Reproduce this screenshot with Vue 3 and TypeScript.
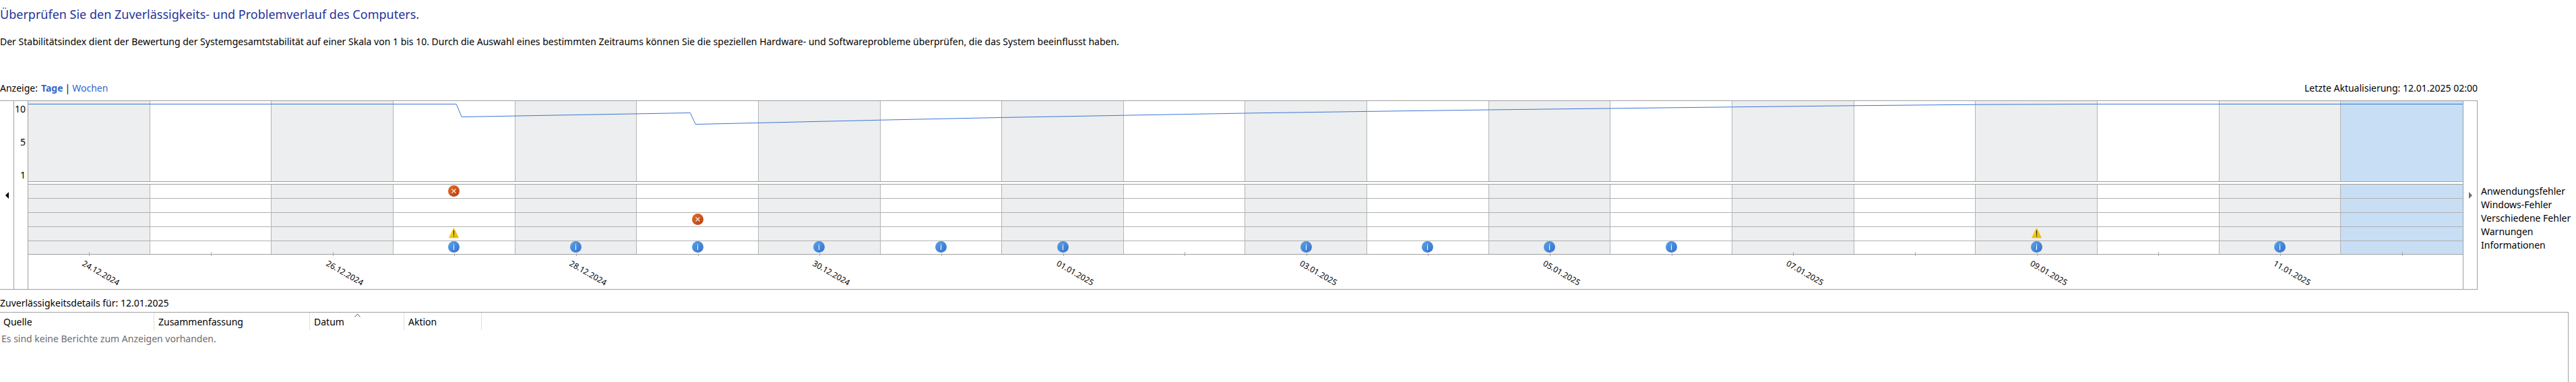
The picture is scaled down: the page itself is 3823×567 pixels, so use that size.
<script setup lang="ts">
type Kind = 'error' | 'warning' | 'info'
interface Day { date: string; events: (Kind | null)[]; selected: boolean }

const rowNames = ['Anwendungsfehler', 'Windows-Fehler', 'Verschiedene Fehler', 'Warnungen', 'Informationen']
const dates = [
  '24.12.2024', '25.12.2024', '26.12.2024', '27.12.2024', '28.12.2024', '29.12.2024', '30.12.2024', '31.12.2024',
  '01.01.2025', '02.01.2025', '03.01.2025', '04.01.2025', '05.01.2025', '06.01.2025', '07.01.2025', '08.01.2025',
  '09.01.2025', '10.01.2025', '11.01.2025', '12.01.2025',
]
const infoDays = [3, 4, 5, 6, 7, 8, 10, 11, 12, 13, 16, 18]
const days: Day[] = dates.map((date, i) => ({
  date,
  selected: i === dates.length - 1,
  events: [
    i === 3 ? 'error' : null,
    null,
    i === 5 ? 'error' : null,
    i === 3 || i === 16 ? 'warning' : null,
    infoDays.includes(i) ? 'info' : null,
  ],
}))

const columns = ['Quelle', 'Zusammenfassung', 'Datum', 'Aktion']
const stability = '0,4.5 635,4.5 643,23.5 982,17.5 990,34.5 1265,28.2 1446,24.4 1626,21.2 1806,18 1987,15.4 2168,13 2349,10.9 2529,8.8 2709,6.8 2890,5.2 3071,4.5 3612,4.5'
</script>

<template>
  <main class="page">
    <h1>Überprüfen Sie den Zuverlässigkeits- und Problemverlauf des Computers.</h1>
    <p class="intro">Der Stabilitätsindex dient der Bewertung der Systemgesamtstabilität auf einer Skala von 1 bis 10. Durch die Auswahl eines bestimmten Zeitraums können Sie die speziellen Hardware- und Softwareprobleme überprüfen, die das System beeinflusst haben.</p>

    <div class="toolbar">
      <nav class="view">
        <span class="caption">Anzeige:</span>
        <a href="#tage" class="current">Tage</a>
        <span>|</span>
        <a href="#wochen">Wochen</a>
      </nav>
      <span>Letzte Aktualisierung: 12.01.2025 02:00</span>
    </div>

    <div class="chart-area">
      <section class="chart">
        <button class="scroll" type="button" aria-label="Zurück">
          <svg width="5" height="10" viewBox="0 0 5 10"><path d="M5 0v10L0 5z" fill="#000" /></svg>
        </button>
        <div class="scale"><span>10</span><span>5</span><span>1</span></div>
        <div class="plot">
          <div class="graph">
            <div v-for="d in days" :key="d.date" class="day" :class="{ selected: d.selected }"></div>
            <svg class="curve" viewBox="0 0 3612 119" preserveAspectRatio="none">
              <polyline :points="stability" fill="none" stroke="#3a76d6" stroke-width="1" vector-effect="non-scaling-stroke" />
            </svg>
          </div>
          <div class="events">
            <div v-for="d in days" :key="d.date" class="day" :class="{ selected: d.selected }">
              <div v-for="(e, r) in d.events" :key="r" class="cell">
                <svg v-if="e === 'error'" width="17" height="17" viewBox="0 0 17 17">
                  <defs><linearGradient id="err" x1="0" y1="0" x2="1" y2="1"><stop offset="0" stop-color="#e0702c" /><stop offset="1" stop-color="#b83c0c" /></linearGradient></defs>
                  <circle cx="8.5" cy="8.5" r="8.5" fill="url(#err)" />
                  <path d="M5.5 5.5l6 6M11.5 5.5l-6 6" stroke="#fbe9e0" stroke-width="1.2" />
                </svg>
                <svg v-else-if="e === 'warning'" width="17" height="17" viewBox="0 0 17 17">
                  <defs><linearGradient id="warn" x1="0" y1="0" x2="1" y2="1"><stop offset="0" stop-color="#ffe81a" /><stop offset="1" stop-color="#eeb000" /></linearGradient></defs>
                  <path d="M8.5 0.8L15.3 14.8H1.7z" fill="url(#warn)" stroke="#eabc00" stroke-width="1" stroke-linejoin="round" />
                  <path d="M8.5 4v6.5M8.5 11.6v1.6" stroke="#222" stroke-width="1.2" />
                </svg>
                <svg v-else-if="e === 'info'" width="17" height="17" viewBox="0 0 17 17">
                  <defs><linearGradient id="inf" x1="0" y1="0" x2="1" y2="1"><stop offset="0" stop-color="#56a6e8" /><stop offset="1" stop-color="#386ccc" /></linearGradient></defs>
                  <circle cx="8.5" cy="8.5" r="8.5" fill="url(#inf)" />
                  <path d="M8.5 6.2v6.8M8.5 4v1.2" stroke="#fff" stroke-width="1.1" />
                </svg>
              </div>
            </div>
          </div>
          <div class="axis">
            <div v-for="(d, i) in days" :key="d.date" class="tick" :class="{ below: d.events[4] }">
              <span v-if="i % 2 === 0" class="date">{{ d.date }}</span>
            </div>
          </div>
        </div>
        <button class="scroll next" type="button" aria-label="Weiter" disabled>
          <svg width="5" height="10" viewBox="0 0 5 10"><path d="M0 0v10L5 5z" fill="#6d6d6d" /></svg>
        </button>
      </section>
      <ul class="rows"><li v-for="name in rowNames" :key="name">{{ name }}</li></ul>
    </div>

    <h2>Zuverlässigkeitsdetails für: 12.01.2025</h2>
    <section class="details">
      <table>
        <thead>
          <tr>
            <th v-for="c in columns" :key="c" scope="col" :class="c.toLowerCase()">
              {{ c }}
              <svg v-if="c === 'Datum'" class="sort" width="9" height="6" viewBox="0 0 9 6"><path d="M0.5 5.5l4-4.5 4 4.5" fill="none" stroke="#555" /></svg>
            </th>
            <th class="rest"></th>
          </tr>
        </thead>
        <tbody>
          <tr><td colspan="5">Es sind keine Berichte zum Anzeigen vorhanden.</td></tr>
        </tbody>
      </table>
    </section>
  </main>
</template>

<style>
html, body, #app { height: 100%; }
body { margin: 0; background: #fff; overflow: hidden; }
</style>

<style scoped>
.page {
  display: flex;
  flex-direction: column;
  box-sizing: border-box;
  min-height: 100vh;
  padding: 7px 11px 0 0;
  font: 14px/20px "Noto Sans", "Open Sans", sans-serif;
  color: #000;
}
h1 { margin: 0; font-size: 18px; line-height: 28px; font-weight: 400; color: #1f3399; }
.intro { margin: 17px 0 0; }
.toolbar { display: flex; justify-content: space-between; margin: 49px 135px 8px 0; }
.view { display: flex; gap: 3px; }
.view a { color: #3366cc; text-decoration: none; }
.caption { margin-right: 2px; }
.view .current { font-weight: 700; }
.chart-area { display: flex; }
.chart { display: flex; flex: 1; border: 1px solid #a0a0a0; border-left: 0; }
.scroll { width: 20px; padding: 0; border: 0; background: none; display: flex; align-items: center; justify-content: center; }
.scale {
  display: flex; flex-direction: column; gap: 29px; align-items: flex-end;
  box-sizing: border-box; width: 21px; padding: 2px 3px 0 0;
  border-left: 1px solid #a0a0a0;
}
.plot { flex: 1; border: 1px solid #a0a0a0; border-width: 0 1px; }
.graph, .events, .axis { display: grid; grid-template-columns: repeat(20, 1fr); }
.graph { position: relative; height: 119px; border-bottom: 1px solid #a0a0a0; }
.curve { position: absolute; inset: 0; width: 100%; height: 100%; }
.events { margin-top: 3px; border: 1px solid #a0a0a0; border-width: 1px 0; }
.day { border-right: 1px solid #b4b4b4; }
.day:nth-child(odd) { background: #edeeef; }
.day:nth-child(20) { border-right: 0; }
.day.selected { background: #c7def5; }
.cell {
  display: flex; justify-content: center; align-items: flex-start;
  box-sizing: border-box; height: 21px; padding-top: 1px; border-bottom: 1px solid #b0b0b0;
}
.cell:last-child { height: 19px; padding-top: 0; border-bottom: 0; }
.cell svg { flex: none; }
.axis { height: 51px; }
.tick { position: relative; }
.tick::before { content: ""; position: absolute; left: 50%; top: -4px; width: 1px; height: 6px; background: #a8a8a8; }
.tick.below::before { top: -2px; height: 4px; }
.date {
  position: absolute; left: 50%; top: 4px; margin-left: -9px;
  font-size: 12px; line-height: 16px; transform: rotate(30deg); transform-origin: 0 50%;
}
.rows { width: 130px; margin: 125px 0 0; padding: 0 0 0 5px; list-style: none; white-space: nowrap; }
h2 { margin: 10px 0 3px; font-size: 14px; line-height: 20px; font-weight: 400; }
.details { flex: 1; border: 1px solid #a0a0a0; border-width: 1px 1px 0 0; }
table { width: 100%; border-collapse: collapse; table-layout: fixed; }
th { position: relative; height: 25px; padding: 1px 0 0 6px; border-right: 1px solid #e0e0e0; text-align: left; font-weight: 400; }
.quelle { width: 223px; padding-left: 5px; }
.zusammenfassung { width: 224px; }
.datum { width: 133px; }
.aktion { width: 108px; }
.rest { border: 0; }
.sort { position: absolute; left: 50%; top: 1px; margin-left: -4px; }
td { padding: 3px 0 0 2px; color: #6d6d6d; }
</style>
